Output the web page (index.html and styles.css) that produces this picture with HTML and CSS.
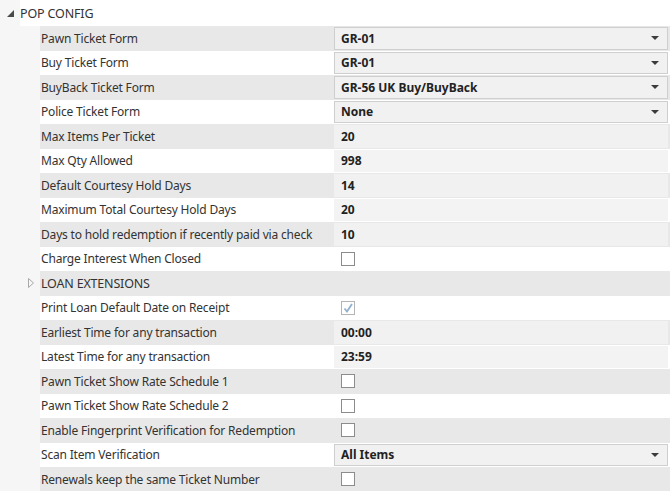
FILE: index.html
```html
<!DOCTYPE html>
<html>
<head>
<meta charset="utf-8">
<link rel="stylesheet" href="styles.css">
</head>
<body>
<div class="grid">
  <div class="cat-header">
    <span class="expander">
      <svg width="7" height="7" viewBox="0 0 7 7"><polygon points="7,0 7,7 0,7" fill="#4a4a4a"/></svg>
    </span>
    <span class="cat-title">POP CONFIG</span>
  </div>

  <div class="row alt"><div class="indent"></div><div class="label">Pawn Ticket Form</div><div class="value"><div class="combo"><span>GR-01</span><span class="arrow"></span></div></div></div>
  <div class="row"><div class="indent"></div><div class="label">Buy Ticket Form</div><div class="value"><div class="combo"><span>GR-01</span><span class="arrow"></span></div></div></div>
  <div class="row alt"><div class="indent"></div><div class="label">BuyBack Ticket Form</div><div class="value"><div class="combo"><span>GR-56 UK Buy/BuyBack</span><span class="arrow"></span></div></div></div>
  <div class="row"><div class="indent"></div><div class="label">Police Ticket Form</div><div class="value"><div class="combo"><span>None</span><span class="arrow"></span></div></div></div>
  <div class="row alt"><div class="indent"></div><div class="label">Max Items Per Ticket</div><div class="value"><div class="text">20</div></div></div>
  <div class="row"><div class="indent"></div><div class="label">Max Qty Allowed</div><div class="value"><div class="text">998</div></div></div>
  <div class="row alt"><div class="indent"></div><div class="label">Default Courtesy Hold Days</div><div class="value"><div class="text">14</div></div></div>
  <div class="row"><div class="indent"></div><div class="label">Maximum Total Courtesy Hold Days</div><div class="value"><div class="text">20</div></div></div>
  <div class="row alt"><div class="indent"></div><div class="label">Days to hold redemption if recently paid via check</div><div class="value"><div class="text">10</div></div></div>
  <div class="row"><div class="indent"></div><div class="label">Charge Interest When Closed</div><div class="value"><span class="check"></span></div></div>
  <div class="row alt sub"><div class="indent">
      <svg width="6" height="10" viewBox="0 0 6 10"><polygon points="0.5,0.5 5.5,5 0.5,9.5" fill="none" stroke="#a8a8a8" stroke-width="1"/></svg>
    </div><div class="label">LOAN EXTENSIONS</div><div class="value"></div></div>
  <div class="row"><div class="indent"></div><div class="label">Print Loan Default Date on Receipt</div><div class="value"><span class="check checked"><svg width="12" height="12" viewBox="0 0 12 12"><path d="M2.5 6.5 L5 9.5 L10 2" fill="none" stroke="#8fb0cf" stroke-width="1.8"/></svg></span></div></div>
  <div class="row alt"><div class="indent"></div><div class="label">Earliest Time for any transaction</div><div class="value"><div class="text">00:00</div></div></div>
  <div class="row"><div class="indent"></div><div class="label">Latest Time for any transaction</div><div class="value"><div class="text">23:59</div></div></div>
  <div class="row alt"><div class="indent"></div><div class="label">Pawn Ticket Show Rate Schedule 1</div><div class="value"><span class="check"></span></div></div>
  <div class="row"><div class="indent"></div><div class="label">Pawn Ticket Show Rate Schedule 2</div><div class="value"><span class="check"></span></div></div>
  <div class="row alt"><div class="indent"></div><div class="label">Enable Fingerprint Verification for Redemption</div><div class="value"><span class="check"></span></div></div>
  <div class="row"><div class="indent"></div><div class="label">Scan Item Verification</div><div class="value"><div class="combo"><span>All Items</span><span class="arrow"></span></div></div></div>
  <div class="row alt"><div class="indent"></div><div class="label">Renewals keep the same Ticket Number</div><div class="value"><span class="check"></span></div></div>
</div>
</body>
</html>
```

FILE: styles.css
```css
html, body {
  margin: 0;
  padding: 0;
}
body {
  width: 670px;
  height: 491px;
  overflow: hidden;
  background: #f6f6f6;
  font-family: "Noto Sans", "Open Sans", sans-serif;
  font-size: 12px;
  color: #2b2b2b;
}
.grid {
  display: flex;
  flex-direction: column;
}
.cat-header {
  height: 26px;
  display: flex;
  align-items: center;
}
.expander {
  width: 20px;
  display: flex;
  justify-content: center;
  align-items: center;
  padding-top: 1px;
}
.cat-title {
  flex: 1;
  background: #ffffff;
  height: 100%;
  display: flex;
  align-items: center;
  font-size: 12.5px;
  letter-spacing: -0.15px;
  color: #333;
}
.row {
  display: grid;
  grid-template-columns: 40px 293px 1fr;
  height: 24.5px;
  flex: none;
}
.indent {
  display: flex;
  align-items: center;
  justify-content: flex-start;
  padding-left: 28px;
}
.label {
  background: #ffffff;
  display: flex;
  align-items: center;
  padding-left: 1px;
  white-space: nowrap;
  letter-spacing: -0.18px;
  color: #333;
}
.row.alt .label,
.row.alt .value {
  background: #e8e8e8;
}
.value {
  background: #ffffff;
  display: flex;
  align-items: center;
  padding: 1px 2px 1px 1px;
}
.row.sub .label {
  font-size: 12.5px;
}
.combo {
  flex: 1;
  height: 100%;
  box-sizing: border-box;
  border: 1px solid #cfcfcf;
  background: #f1f1f1;
  display: flex;
  align-items: center;
  justify-content: space-between;
  padding: 0 8px 0 6px;
  font-weight: bold;
  color: #222;
}
.arrow {
  width: 0;
  height: 0;
  border-left: 4px solid transparent;
  border-right: 4px solid transparent;
  border-top: 4px solid #3c3c3c;
}
.text {
  flex: 1;
  height: 100%;
  box-sizing: border-box;
  background: #f3f3f3;
  display: flex;
  align-items: center;
  padding-left: 7px;
  font-weight: bold;
  color: #222;
}
.row.alt .text {
  background: #f1f1f1;
}
.check {
  margin-left: 7px;
  width: 14px;
  height: 14px;
  box-sizing: border-box;
  border: 1px solid #8c8c8c;
  background: #ffffff;
  display: flex;
  align-items: center;
  justify-content: center;
}
.check.checked {
  border-color: #b5b5b5;
}
```
